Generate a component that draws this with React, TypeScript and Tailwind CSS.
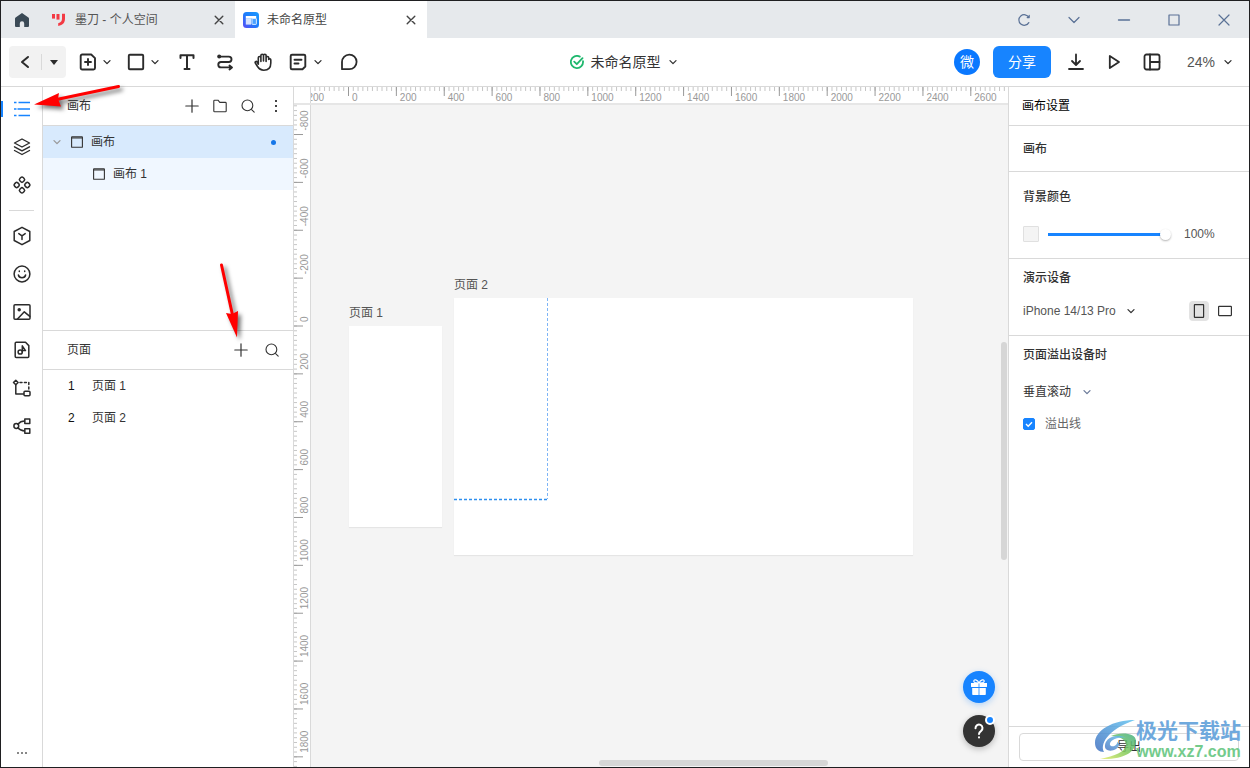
import React from "react";

const FONT = "font-['Liberation_Sans','Noto_Sans_CJK_SC',sans-serif]";

type IconProps = { size?: number; sw?: number; className?: string; children: React.ReactNode };

function Icon({ size = 20, sw = 1.6, className = "", children }: IconProps) {
  return (
    <svg
      width={size}
      height={size}
      viewBox={`0 0 ${size} ${size}`}
      fill="none"
      stroke="currentColor"
      strokeWidth={sw}
      strokeLinecap="round"
      strokeLinejoin="round"
      className={`block shrink-0 ${className}`}
      aria-hidden="true"
    >
      {children}
    </svg>
  );
}

function Chevron({ className = "" }: { className?: string }) {
  return (
    <Icon size={10} sw={1.3} className={className}>
      <path d="M2 3.600 5 6.600 8 3.600" />
    </Icon>
  );
}

const Plus = () => (
  <Icon size={14} sw={1.2}>
    <path d="M7 .8v12.4M.8 7h12.4" />
  </Icon>
);

const Search = () => (
  <Icon size={14} sw={1.1}>
    <circle cx="6.4" cy="6.4" r="5.4" />
    <path d="m10.6 10.6 2.6 2.6" />
  </Icon>
);

const Frame = () => (
  <Icon size={12} sw={1.1}>
    <rect x=".6" y=".9" width="10.8" height="10.4" rx=".4" />
    <path d="M.8 2h10.400" />
  </Icon>
);

function TitleBar() {
  return (
    <header className="flex h-[37px] shrink-0 items-stretch bg-[#e6e9ec]">
      <button aria-label="首页" className="flex w-[42px] items-center justify-center text-[#3b4a56]">
        <svg width="14" height="14" viewBox="0 0 14 14" fill="currentColor" aria-hidden="true">
          <path d="M7 0 .6 4.6Q0 5 0 5.800V13q0 1 1 1h3.800V10.400a2.200 2.200 0 0 1 4.400 0V14H13q1 0 1-1V5.800Q14 5 13.400 4.600Z" />
        </svg>
      </button>
      <div className="flex w-48 items-center gap-2 px-2 text-xs text-[#555]">
        <svg width="16" height="14" viewBox="0 0 16 14" className="shrink-0" aria-hidden="true">
          <rect x="1" y="1" width="3" height="4.600" fill="#f33a44" />
          <rect x="5.500" y="1" width="3" height="5.600" fill="#f33a44" />
          <path d="M11 .800h3v4.800c0 4.200-2 6.600-6.800 7.400v-2.800c2.800-.6 3.800-2 3.800-4.600Z" fill="#f33a44" />
        </svg>
        <span className="flex-1">墨刀 - 个人空间</span>
        <button aria-label="关闭标签" className="flex w-4 justify-center text-[#444]">
          <Icon size={10} sw={1.4}><path d="m1.200 1.200 7.600 7.600M8.800 1.200 1.200 8.800" /></Icon>
        </button>
      </div>
      <div className="flex w-48 items-center gap-2 bg-white px-2 text-xs text-[#444]">
        <svg width="16" height="16" viewBox="0 0 16 16" className="shrink-0" aria-hidden="true">
          <defs>
            <linearGradient id="proto" x1="0" y1="1" x2="1" y2="0">
              <stop offset="0" stopColor="#5a4bf5" />
              <stop offset=".5" stopColor="#1d7dfb" />
              <stop offset="1" stopColor="#1a9bff" />
            </linearGradient>
          </defs>
          <rect width="16" height="16" rx="3.500" fill="url(#proto)" />
          <rect x="2.800" y="4" width="10.400" height="2.600" fill="#fff" />
          <rect x="2.800" y="6.600" width="5.400" height="6" fill="#fff" opacity=".8" />
          <rect x="9" y="6.400" width="4.400" height="6" rx=".6" fill="#4aa0ff" stroke="#fff" strokeWidth=".8" />
        </svg>
        <span className="flex-1">未命名原型</span>
        <button aria-label="关闭标签" className="flex w-4 justify-center text-[#444]">
          <Icon size={10} sw={1.4}><path d="m1.200 1.200 7.600 7.600M8.800 1.200 1.200 8.800" /></Icon>
        </button>
      </div>
      <div className="ml-auto flex text-[#5a7196]">
        <button aria-label="刷新" className="flex w-[50px] items-center justify-center">
          <Icon size={14} sw={1.2}><path d="M11.800 9.600a5.300 5.300 0 1 1 0-5.200M12.200 2.400v2.200h-2" /></Icon>
        </button>
        <button aria-label="更多" className="flex w-[50px] items-center justify-center">
          <Icon size={14} sw={1.2}><path d="M2 4.500 7 9.500l5-5" /></Icon>
        </button>
        <button aria-label="最小化" className="flex w-[50px] items-center justify-center">
          <Icon size={14} sw={1.4}><path d="M1.500 7h11" /></Icon>
        </button>
        <button aria-label="最大化" className="flex w-[50px] items-center justify-center">
          <Icon size={14} sw={1.2}><rect x="2" y="2" width="10" height="10" /></Icon>
        </button>
        <button aria-label="关闭" className="flex w-[50px] items-center justify-center">
          <Icon size={14} sw={1.2}><path d="m2 2 10 10M12 2 2 12" /></Icon>
        </button>
      </div>
    </header>
  );
}

function Toolbar() {
  return (
    <div className="grid h-[49px] shrink-0 grid-cols-[1fr_auto_1fr] items-center border-b border-[#d9d9d9] text-[#2b2b2b]">
      <div className="flex items-center pl-2">
        <div className="flex h-8 w-[57px] items-center rounded bg-[#f2f2f2]">
          <button aria-label="返回" className="flex w-8 items-center justify-center">
            <Icon size={14} sw={2}><path d="M10 2 4 7l6 5" /></Icon>
          </button>
          <span className="h-4 w-px bg-[#d9d9d9]" />
          <button aria-label="返回菜单" className="flex flex-1 items-center justify-center">
            <svg width="8" height="5" viewBox="0 0 8 5" fill="currentColor" aria-hidden="true"><path d="M0 0h8L4 5Z" /></svg>
          </button>
        </div>
        <button aria-label="添加页面" className="ml-3 flex items-center gap-1">
          <Icon size={20} sw={1.900}>
            <path d="M4.200 2.500h9l3.800 3.600V16a1.500 1.500 0 0 1-1.500 1.500H4.200A1.500 1.500 0 0 1 2.700 16V4A1.500 1.500 0 0 1 4.200 2.500ZM10 7v6M7 10h6" />
          </Icon>
          <Chevron />
        </button>
        <button aria-label="形状" className="ml-3.5 flex items-center gap-1">
          <Icon size={20} sw={1.900}><rect x="2.800" y="2.800" width="14.400" height="14.400" rx="1" /></Icon>
          <Chevron />
        </button>
        <button aria-label="文本" className="ml-[17px]">
          <Icon size={20} sw={2}><path d="M3.500 6V3.200h13V6M10 3.200v13.600M7.500 17h5" /></Icon>
        </button>
        <button aria-label="连接线" className="ml-[18px]">
          <Icon size={20} sw={1.900}>
            <circle cx="4.200" cy="4.600" r="2" fill="currentColor" stroke="none" />
            <path d="M4.500 4.600h9.300a2.700 2.700 0 0 1 0 5.400H6a2.700 2.700 0 0 0 0 5.400h10.500M14.500 13.500l2.500 1.900-2.500 2" />
          </Icon>
        </button>
        <button aria-label="抓手" className="ml-[18px]">
          <Icon size={20} sw={1.600}>
            <path d="M5.300 12.200V5.800a1.300 1.300 0 0 1 2.600 0V9.500M7.900 9V3.600a1.300 1.300 0 0 1 2.600 0V9M10.500 9V3.600a1.300 1.300 0 0 1 2.600 0V9.500M13.100 9.300V5.800a1.300 1.300 0 0 1 2.600 0V7.500a1.100 1.100 0 0 1 2.100.3V11c0 4.600-2.800 7.200-7 7.200-3.600 0-5-1.600-6.600-4.200L2.300 11c-.6-1.200.9-2 1.700-1.200l1.300 2.400" />
          </Icon>
        </button>
        <button aria-label="便签" className="ml-[15px] flex items-center gap-[5px]">
          <Icon size={20} sw={1.900}>
            <path d="M4 2.800h12a1.300 1.300 0 0 1 1.300 1.300V14.500L14.500 17.200H4a1.300 1.300 0 0 1-1.300-1.300V4.100A1.300 1.300 0 0 1 4 2.800ZM6.500 7.800h7M6.500 11.500h4" />
          </Icon>
          <Chevron />
        </button>
        <button aria-label="评论" className="ml-4">
          <Icon size={20} sw={1.800}><path d="M3 17.200V10a7.300 7.300 0 1 1 7.300 7.200Z" /></Icon>
        </button>
      </div>
      <button className="flex items-center gap-[7px] pr-[3px] text-sm text-[#333]">
        <svg width="14" height="14" viewBox="0 0 14 14" fill="none" stroke="#1fb86e" strokeWidth="1.800" strokeLinecap="round" strokeLinejoin="round" aria-hidden="true">
          <path d="M9.800 1.600A6.100 6.100 0 1 0 13 6.200M4.200 6.600l2.600 2.600 5.700-6" />
        </svg>
        <span>未命名原型</span>
        <Chevron />
      </button>
      <div className="flex items-center justify-end pr-4">
        <span className="flex size-[26px] items-center justify-center rounded-full bg-[#0a78ff] text-sm text-white">微</span>
        <button className="ml-[13px] h-8 w-[58px] rounded-md bg-[#1784ff] text-sm text-white">分享</button>
        <button aria-label="下载" className="ml-4">
          <Icon size={18} sw={1.800}><path d="M9 1.500v10M5 8l4 4 4-4M2 16h14" /></Icon>
        </button>
        <button aria-label="运行" className="ml-5">
          <Icon size={18} sw={1.800}><path d="M4.800 3v12L14 9Z" /></Icon>
        </button>
        <button aria-label="布局" className="ml-5">
          <Icon size={18} sw={1.800}>
            <rect x="1.500" y="1.500" width="15" height="15" rx="2" />
            <path d="M7 1.500v15M7 9h9.500" />
          </Icon>
        </button>
        <button className="ml-[26px] flex items-center gap-2 text-sm text-[#555]">
          24%
          <Chevron className="text-[#2b2b2b]" />
        </button>
      </div>
    </div>
  );
}

const railTop: { name: string; icon: React.ReactNode }[] = [
  {
    name: "图层",
    icon: (
      <Icon size={20} sw={1.400}>
        <path d="m10 2 7.500 4-7.500 4-7.500-4ZM2.500 9.800l7.500 4 7.500-4M2.500 13.500l7.500 4 7.500-4" />
      </Icon>
    ),
  },
  {
    name: "组件",
    icon: (
      <Icon size={20} sw={1.500}>
        <rect x="-2.300" y="-2.300" width="4.600" height="4.600" rx="1.600" transform="translate(10 4.700) rotate(45)" />
        <rect x="-2.300" y="-2.300" width="4.600" height="4.600" rx="1.600" transform="translate(10 15.300) rotate(45)" />
        <rect x="-2.300" y="-2.300" width="4.600" height="4.600" rx="1.600" transform="translate(4.700 10) rotate(45)" />
        <rect x="-2.300" y="-2.300" width="4.600" height="4.600" rx="1.600" transform="translate(15.300 10) rotate(45)" />
      </Icon>
    ),
  },
];

const railBottom: { name: string; icon: React.ReactNode }[] = [
  {
    name: "素材",
    icon: (
      <Icon size={20} sw={1.500}>
        <path d="m10 1.300 7.800 4.200v9L10 18.700l-7.800-4.200v-9ZM6.800 7.600 10 9.800l3.200-2.200M10 9.800v3.600" />
      </Icon>
    ),
  },
  {
    name: "图标",
    icon: (
      <Icon size={20} sw={1.500}>
        <circle cx="10" cy="10" r="7.900" />
        <path d="M6.400 11c.7 3.600 6.500 3.600 7.200 0M7.300 7v.6M12.700 7v.6" />
      </Icon>
    ),
  },
  {
    name: "图片",
    icon: (
      <Icon size={20} sw={1.500}>
        <rect x="2" y="2.800" width="16" height="14.400" rx="1" />
        <path d="m5.500 17 6.800-7.200 5.500 4.600" />
        <circle cx="7.200" cy="7.700" r="1" fill="currentColor" />
      </Icon>
    ),
  },
  {
    name: "母版",
    icon: (
      <Icon size={20} sw={1.500}>
        <path d="M4.200 2.300h9.300l3.300 3.300v11a1 1 0 0 1-1 1H4.200a1 1 0 0 1-1-1V3.300a1 1 0 0 1 1-1Z" />
        <circle cx="8.200" cy="12" r="2.100" />
        <path d="M10.300 12V5.800l3.200 4.800h-3.200" />
      </Icon>
    ),
  },
  {
    name: "流程",
    icon: (
      <Icon size={20} sw={1.500}>
        <path d="m3.800 2.300 2.300 2.200-2.300 2.200-2.300-2.200Z" />
        <path d="M3.800 7v9h7.800" />
        <path d="M8 4.500h8.800V12" strokeDasharray="2 2.400" />
        <rect x="12" y="13.200" width="6" height="4.600" rx="1" />
      </Icon>
    ),
  },
  {
    name: "导图",
    icon: (
      <Icon size={20} sw={1.500}>
        <circle cx="4.300" cy="10" r="2.400" />
        <rect x="12.800" y="3" width="5" height="4.400" />
        <rect x="12.800" y="12.800" width="5" height="4.400" />
        <path d="M5.800 8.200C7.500 6.300 9.500 5 12.600 5M5.800 11.800c1.700 1.900 3.700 3.200 6.800 3.200" />
      </Icon>
    ),
  },
];

function Rail() {
  return (
    <nav aria-label="工具" className="flex w-[42px] shrink-0 flex-col border-r border-[#d9d9d9] pt-[3px] text-[#2b2b2b]">
      <button aria-label="页面" className="flex h-[38px] items-center text-[#1784ff]">
        <span className="h-4 w-0.5 bg-[#1784ff]" />
        <svg width="20" height="20" viewBox="0 0 20 20" fill="none" stroke="currentColor" strokeWidth="1.600" className="ml-[9px]" aria-hidden="true">
          <path d="M2 3.500h2.500M6.500 3.500H18M2 10h2.500M5.500 10H18M2 16.500h2.500M6.500 16.500H18" />
        </svg>
      </button>
      {railTop.map((i) => (
        <button key={i.name} aria-label={i.name} className="flex h-[38px] items-center justify-center">{i.icon}</button>
      ))}
      <span className="mx-2 my-1.5 h-px bg-[#d9d9d9]" />
      {railBottom.map((i) => (
        <button key={i.name} aria-label={i.name} className="flex h-[38px] items-center justify-center">{i.icon}</button>
      ))}
      <button aria-label="更多" className="mt-auto mb-2 flex h-3 items-center justify-center gap-0.5">
        <span className="size-0.5 bg-[#888]" />
        <span className="size-0.5 bg-[#888]" />
        <span className="size-0.5 bg-[#888]" />
      </button>
    </nav>
  );
}

function IconButton({ label, children }: { label: string; children: React.ReactNode }) {
  return <button aria-label={label} className="flex size-7 items-center justify-center">{children}</button>;
}

function Sidebar() {
  return (
    <aside className="flex w-[251px] shrink-0 flex-col border-r border-[#d9d9d9] text-xs text-[#333]">
      <section className="flex h-[244px] shrink-0 flex-col border-b border-[#d9d9d9]">
        <div className="flex h-[39px] items-center border-b border-[#d9d9d9] pr-[3px] pl-6">
          <h2 className="flex-1">画布</h2>
          <IconButton label="新建画布"><Plus /></IconButton>
          <IconButton label="新建文件夹">
            <Icon size={14} sw={1.100}><path d="M.8 2q0-.8.800-.8h3.400l1.800 2.200h5.600q.8 0 .8.800v7.800q0 .8-.8.800H1.600q-.8 0-.8-.8Z" /></Icon>
          </IconButton>
          <IconButton label="搜索画布"><Search /></IconButton>
          <IconButton label="更多">
            <svg width="4" height="14" viewBox="0 0 4 14" fill="#444" aria-hidden="true">
              <rect x="1" y="1" width="2" height="2" /><rect x="1" y="6" width="2" height="2" /><rect x="1" y="11" width="2" height="2" />
            </svg>
          </IconButton>
        </div>
        <ul>
          <li className="flex h-8 items-center bg-[#d8eafd] pr-[17px] pl-1.5">
            <button aria-label="折叠" className="flex w-4 justify-center text-[#999]"><Chevron /></button>
            <span className="mr-2 ml-1.5"><Frame /></span>
            <span className="flex-1">画布</span>
            <span className="size-[5px] rounded-full bg-[#1677e8]" />
          </li>
          <li className="flex h-8 items-center gap-2 bg-[#f0f7ff] pl-[50px]">
            <Frame />
            <span>画布 1</span>
          </li>
        </ul>
      </section>
      <section>
        <div className="flex h-[39px] items-center gap-[3px] border-b border-[#d9d9d9] pr-[7px] pl-6">
          <h2 className="flex-1">页面</h2>
          <IconButton label="新建页面"><Plus /></IconButton>
          <IconButton label="搜索页面"><Search /></IconButton>
        </div>
        <ol>
          {[1, 2].map((n) => (
            <li key={n} className="flex h-8 items-center pl-[25px]">
              <span className="w-6 text-[#111]">{n}</span>
              <span>页面 {n}</span>
            </li>
          ))}
        </ol>
      </section>
    </aside>
  );
}

const STEP = 47.87;

function HorizontalRuler() {
  const minor = Array.from({ length: 400 }, (_, i) => 37.5 + (i - 10) * (STEP / 10));
  const major = Array.from({ length: 15 }, (_, i) => i - 1);
  return (
    <svg className="block h-4 w-0 min-w-0 flex-1" aria-hidden="true">
      {minor.map((x, i) => (
        <path key={i} d={`M${x} 0v4`} stroke="#c6c6c6" />
      ))}
      {major.map((n) => (
        <g key={n}>
          <path d={`M${37.5 + n * STEP} 0v9`} stroke="#999" />
          <text x={37.5 + n * STEP + 3.5} y="14" fontSize="10" fill="#999">{n * 200}</text>
        </g>
      ))}
    </svg>
  );
}

function VerticalRuler() {
  const minor = Array.from({ length: 300 }, (_, i) => 221 + (i - 50) * (STEP / 10));
  const major = Array.from({ length: 14 }, (_, i) => i - 4);
  return (
    <svg className="block h-full w-[17px] shrink-0 border-r border-[#d9d9d9]" aria-hidden="true">
      {minor.map((y, i) => (
        <path key={i} d={`M0 ${y}h3`} stroke="#c6c6c6" />
      ))}
      {major.map((n) => (
        <g key={n}>
          <path d={`M0 ${221 + n * STEP}h9`} stroke="#999" />
          <text transform={`translate(14 ${221 + n * STEP - 4}) rotate(-90)`} fontSize="10" fill="#999">{n * 200}</text>
        </g>
      ))}
    </svg>
  );
}

function Workspace() {
  return (
    <main className="flex min-w-0 flex-1 flex-col text-xs text-[#555]">
      <div className="flex shrink-0 border-b-2 border-[#e6e6e6]">
        <span className="h-4 w-[17px] shrink-0 border-r border-[#d9d9d9]" />
        <HorizontalRuler />
      </div>
      <div className="flex min-h-0 flex-1 overflow-hidden">
        <VerticalRuler />
        <div className="relative min-w-0 flex-1 overflow-hidden bg-[#f4f4f4]">
          <figure className="absolute top-[198px] left-[38px] w-[93px]">
            <figcaption className="h-[23px] leading-5">页面 1</figcaption>
            <div className="h-[201px] bg-white shadow-[0_1px_1px_rgba(0,0,0,0.06)]" />
          </figure>
          <figure className="absolute top-[170px] left-[143px] w-[459px]">
            <figcaption className="h-[23px] leading-5">页面 2</figcaption>
            <div className="h-[257px] bg-white shadow-[0_1px_1px_rgba(0,0,0,0.06)]">
              <svg width="96" height="204" className="block" fill="none" aria-hidden="true">
                <path d="M93.500 0v201" stroke="#7db5f7" strokeDasharray="3 2" />
                <path d="M0 201.500h94" stroke="#2f8fee" strokeWidth="1.400" strokeDasharray="3 2" />
              </svg>
            </div>
          </figure>
          <span className="absolute top-[237px] right-px h-[218px] w-1.5 rounded-full bg-[#d6d6d6]" />
          <span className="absolute bottom-px left-[288px] h-1.5 w-[229px] rounded-full bg-[#d6d6d6]" />
          <div className="absolute right-[13px] bottom-5 flex flex-col gap-3">
            <button aria-label="礼物" className="flex size-8 items-center justify-center rounded-full bg-[#1784ff] text-white shadow-[0_2px_6px_rgba(23,132,255,0.3)]">
              <svg width="16" height="16" viewBox="0 0 16 16" fill="currentColor" aria-hidden="true">
                <path d="M0 4h7.600v4H.300Q0 8 0 7.600ZM8.400 4H16v3.600q0 .4-.3.400H8.400ZM1.200 9h6.400v7H2q-.8 0-.8-.8ZM8.400 9h6.400v6.200q0 .8-.8.800H8.400Z" />
                <path d="M8 4C6.500.5 2.800-.2 2.800 2.200 2.800 3.600 4 4 8 4ZM8 4c1.500-3.500 5.200-4.200 5.200-1.800C13.200 3.600 12 4 8 4Z" fill="none" stroke="currentColor" strokeWidth="1.200" />
              </svg>
            </button>
            <button aria-label="帮助" className="relative flex size-8 items-center justify-center rounded-full bg-[#333] text-white shadow-[0_2px_6px_rgba(0,0,0,0.25)]">
              <Icon size={18} sw={2}>
                <path d="M5.500 6.200a3.500 3.500 0 1 1 5.600 2.700C9.700 9.900 9 10.500 9 12" />
                <path d="M9 15.300v.1" />
              </Icon>
              <span className="absolute top-0 right-0 size-2.5 rounded-full border-2 border-white bg-[#1784ff]" />
            </button>
          </div>
        </div>
      </div>
    </main>
  );
}

function Inspector() {
  return (
    <aside className="flex w-[241px] shrink-0 flex-col border-l border-[#d9d9d9] text-xs text-[#333]">
      <h2 className="flex h-[39px] items-center border-b border-[#d9d9d9] px-[13px] text-black">画布设置</h2>
      <h3 className="flex h-[46px] items-center border-b border-[#d9d9d9] px-[14px] font-medium">画布</h3>
      <section className="flex h-[87px] flex-col border-b border-[#d9d9d9] px-[14px] pt-4">
        <label htmlFor="opacity" className="font-medium leading-[18px]">背景颜色</label>
        <div className="mt-5 flex items-center">
          <button aria-label="选择颜色" className="size-4 rounded-[1px] border border-[#e0e0e0] bg-[#f4f4f4]" />
          <input
            id="opacity"
            type="range"
            defaultValue={100}
            className="ml-[9px] h-3 w-[123px] appearance-none bg-[linear-gradient(#1784ff,#1784ff)] bg-[length:calc(100%-6px)_3px] bg-left bg-no-repeat [&::-webkit-slider-thumb]:size-[11px] [&::-webkit-slider-thumb]:appearance-none [&::-webkit-slider-thumb]:rounded-full [&::-webkit-slider-thumb]:bg-white [&::-webkit-slider-thumb]:shadow-[0_1px_2px_rgba(0,0,0,0.3)]"
          />
          <span className="ml-[13px] text-[#555]">100%</span>
        </div>
      </section>
      <section className="flex h-[77px] flex-col border-b border-[#d9d9d9] pt-[10px] pr-[17px] pl-[14px]">
        <h3 className="font-medium leading-[18px]">演示设备</h3>
        <div className="mt-[14px] flex h-5 items-center">
          <label htmlFor="device" className="sr-only">设备</label>
          <select id="device" className="appearance-none text-[#555]">
            <option>iPhone 14/13 Pro</option>
          </select>
          <Chevron className="pointer-events-none ml-2.5" />
          <button aria-label="竖屏" className="mr-[9px] ml-auto flex size-5 items-center justify-center rounded bg-[#e3e3e3]">
            <Icon size={14} sw={1.200}><rect x="2.400" y=".6" width="9.200" height="12.800" rx=".5" /></Icon>
          </button>
          <button aria-label="横屏" className="flex items-center justify-center">
            <Icon size={14} sw={1.200}><rect x=".6" y="2.400" width="12.800" height="9.200" rx=".5" /></Icon>
          </button>
        </div>
      </section>
      <section className="flex flex-1 flex-col items-start px-[14px] pt-[10px]">
        <h3 className="font-medium leading-[18px]">页面溢出设备时</h3>
        <div className="mt-[18px] flex h-5 items-center">
          <label htmlFor="overflow" className="sr-only">溢出方式</label>
          <select id="overflow" className="appearance-none">
            <option>垂直滚动</option>
          </select>
          <Chevron className="pointer-events-none ml-2.5 text-[#6b7a99]" />
        </div>
        <label className="mt-3 flex h-5 items-center gap-2.5 text-[#666]">
          <span className="relative flex size-3">
            <input type="checkbox" defaultChecked className="peer size-3 appearance-none rounded-xs border border-[#bbb] checked:border-[#1784ff] checked:bg-[#1784ff]" />
            <svg width="12" height="12" viewBox="0 0 12 12" fill="none" stroke="#fff" strokeWidth="1.400" className="pointer-events-none absolute inset-0 hidden peer-checked:block" aria-hidden="true">
              <path d="m3 6 2.200 2.200L9 4.200" />
            </svg>
          </span>
          溢出线
        </label>
      </section>
      <div className="border-t border-[#d9d9d9] px-[10px] pt-1.5 pb-1.5">
        <button className="h-7 w-full rounded border border-[#d9d9d9]">导出</button>
      </div>
    </aside>
  );
}

function Arrows() {
  return (
    <svg width="250" height="350" className="pointer-events-none absolute -top-px -left-px drop-shadow-[3px_3px_2px_rgba(0,0,0,0.55)]" aria-hidden="true">
      <path d="m118.500 86.500-62 13" stroke="#f00" strokeWidth="3" strokeLinecap="round" />
      <path d="m34 104.500 25-11.500-1 6 3 7.500Z" fill="#f00" />
      <path d="m221.500 265 11 50" stroke="#f00" strokeWidth="3" strokeLinecap="round" />
      <path d="m237 337.500-11-24.500 6 1 6-3Z" fill="#f00" />
    </svg>
  );
}

function Watermark() {
  return (
    <div className="pointer-events-none absolute right-2 bottom-1.5 flex items-center">
      <svg width="42" height="42" viewBox="0 0 42 42" aria-hidden="true">
        <defs>
          <linearGradient id="wmBlue" x1="0" y1="1" x2="1" y2="0">
            <stop offset="0" stopColor="#3f6fc0" />
            <stop offset="1" stopColor="#64c4f0" />
          </linearGradient>
          <linearGradient id="wmGreen" x1="0" y1="1" x2="1" y2="0">
            <stop offset="0" stopColor="#e8ee6a" />
            <stop offset=".5" stopColor="#7fc95a" />
            <stop offset="1" stopColor="#3fae86" />
          </linearGradient>
        </defs>
        <path d="M41 1C19 1 1 11 1 24c0 6 4 9 9 9C6 26 12 11 41 1Z" fill="url(#wmBlue)" opacity=".85" />
        <path d="M17 17c8-4 25-4 25 5 0 11-12 19-36 18 15-3 25-7 26-14 0-6-8-9-15-9Z" fill="url(#wmGreen)" opacity=".85" />
        <path d="M32 19c-8-5-20-1-21 7-1 6 6 7 11 4 4-3 4-6 1-7 1 3-5 6-7 3-1-4 7-9 16-7Z" fill="url(#wmBlue)" opacity=".8" />
      </svg>
      <div className="flex flex-col items-center whitespace-nowrap">
        <span className="text-[21px] leading-[23px] font-bold text-[#6fa9dd]">极光下载站</span>
        <span className="text-base leading-[19px] font-bold text-[#74cb8c]">www.xz7.com</span>
      </div>
    </div>
  );
}

export default function App() {
  return (
    <div className={`relative flex h-screen min-h-[600px] flex-col overflow-hidden border border-[#1f1f21] bg-white ${FONT}`}>
      <TitleBar />
      <Toolbar />
      <div className="flex min-h-0 flex-1">
        <Rail />
        <Sidebar />
        <Workspace />
        <Inspector />
      </div>
      <Arrows />
      <Watermark />
    </div>
  );
}
